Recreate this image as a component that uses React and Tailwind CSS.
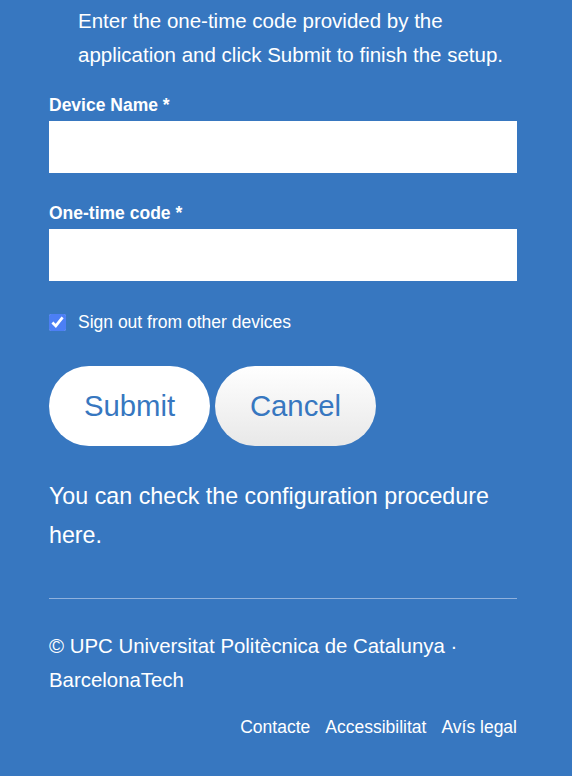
import React, { useState } from "react";

export default function App() {
  const [deviceName, setDeviceName] = useState("");
  const [code, setCode] = useState("");
  const [signOut, setSignOut] = useState(true);

  return (
    <div
      className="min-h-[776px] bg-[#3777c0] text-white pl-[49px] pr-[55px] pt-[4px] pb-[37px]"
      style={{ fontFamily: '"Liberation Sans", Arial, sans-serif' }}
    >
      <p className="pl-[29px] text-[20.5px] leading-[34px]">
        Enter the one-time code provided by the application and click Submit to finish the setup.
      </p>

      <form className="mt-[21px]" onSubmit={(e) => e.preventDefault()}>
        <label htmlFor="device" className="block text-[17.5px] leading-[24px] font-bold">
          Device Name *
        </label>
        <input
          id="device"
          type="text"
          value={deviceName}
          onChange={(e) => setDeviceName(e.target.value)}
          className="mt-[4px] block w-full h-[52px] bg-white text-black px-3 text-[16px] outline-none"
        />

        <label htmlFor="code" className="mt-[28px] block text-[17.5px] leading-[24px] font-bold">
          One-time code *
        </label>
        <input
          id="code"
          type="text"
          value={code}
          onChange={(e) => setCode(e.target.value)}
          className="mt-[4px] block w-full h-[52px] bg-white text-black px-3 text-[16px] outline-none"
        />

        <div className="mt-[32px] flex items-center">
          <input
            id="signout"
            type="checkbox"
            checked={signOut}
            onChange={(e) => setSignOut(e.target.checked)}
            className="m-0 w-[17px] h-[17px] accent-[#4c7ff5]"
          />
          <label htmlFor="signout" className="ml-[12px] text-[17.5px] leading-[18px]">
            Sign out from other devices
          </label>
        </div>

        <div className="mt-[35px] flex gap-[5px]">
          <button
            type="submit"
            className="w-[161px] h-[80px] rounded-full bg-white text-[#3777c0] text-[29.3px]"
          >
            Submit
          </button>
          <button
            type="button"
            className="w-[161px] h-[80px] rounded-full bg-gradient-to-b from-white to-[#e8e8e8] text-[#3777c0] text-[29.3px]"
          >
            Cancel
          </button>
        </div>
      </form>

      <p className="mt-[31px] text-[23.25px] leading-[39px]">
        You can check the configuration procedure here.
      </p>

      <hr className="mt-[43px] border-0 border-t border-[#8fb1dd]" />

      <footer>
        <p className="mt-[30px] text-[20.4px] leading-[34px]">
          © UPC Universitat Politècnica de Catalunya · BarcelonaTech
        </p>
        <nav className="mt-[17px] flex justify-end gap-[15px] text-[17.5px] leading-[27px]">
          <a href="#">Contacte</a>
          <a href="#">Accessibilitat</a>
          <a href="#">Avís legal</a>
        </nav>
      </footer>
    </div>
  );
}
